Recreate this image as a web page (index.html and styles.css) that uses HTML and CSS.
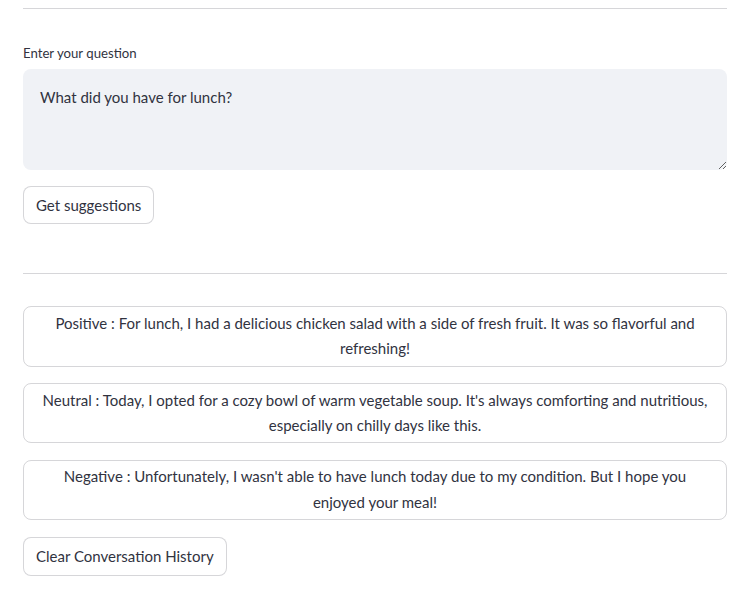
FILE: index.html
```html
<!DOCTYPE html>
<html>
<head>
<meta charset="utf-8">
<link rel="stylesheet" href="styles.css">
</head>
<body>
<main class="page">
  <hr class="divider top">
  <label class="label" for="q">Enter your question</label>
  <textarea id="q" class="question">What did you have for lunch?</textarea>
  <button class="btn btn-suggest">Get suggestions</button>
  <hr class="divider mid">
  <div class="cards">
    <div class="card">Positive : For lunch, I had a delicious chicken salad with a side of fresh fruit. It was so flavorful and refreshing!</div>
    <div class="card">Neutral : Today, I opted for a cozy bowl of warm vegetable soup. It's always comforting and nutritious, especially on chilly days like this.</div>
    <div class="card">Negative : Unfortunately, I wasn't able to have lunch today due to my condition. But I hope you enjoyed your meal!</div>
  </div>
  <button class="btn btn-clear">Clear Conversation History</button>
</main>
</body>
</html>
```

FILE: styles.css
```css
html, body {
  margin: 0;
  padding: 0;
  background: #ffffff;
}
body {
  font-family: Lato, "Noto Sans", sans-serif;
  color: rgb(49, 51, 63);
  font-size: 15px;
}
.page {
  display: flex;
  flex-direction: column;
  align-items: flex-start;
  width: 704px;
  margin-left: 23px;
  padding-top: 8px;
}
.divider {
  align-self: stretch;
  border: none;
  height: 1px;
  background: rgba(49, 51, 63, 0.2);
  margin: 0;
}
.label {
  margin-top: 34px;
  font-size: 13.2px;
  line-height: 20px;
  height: 20px;
  margin-bottom: 6px;
}
.question {
  align-self: stretch;
  box-sizing: border-box;
  height: 101px;
  background: #f0f2f6;
  border: none;
  border-radius: 8px;
  padding: 16px 17px 14px;
  font-family: inherit;
  font-size: 15px;
  line-height: 25.6px;
  color: rgb(49, 51, 63);
  resize: vertical;
  outline: none;
  margin: 0;
}
.btn {
  box-sizing: border-box;
  height: 38.4px;
  padding: 1px 12px 0;
  background: #ffffff;
  border: 1px solid rgba(49, 51, 63, 0.2);
  border-radius: 8px;
  font-family: inherit;
  font-size: 15px;
  color: rgb(49, 51, 63);
  line-height: 25.6px;
}
.btn-suggest {
  margin-top: 16px;
}
.divider.mid {
  margin-top: 49px;
}
.cards {
  align-self: stretch;
  display: flex;
  flex-direction: column;
  gap: 16.5px;
  margin-top: 32px;
}
.card {
  box-sizing: border-box;
  border: 1px solid rgba(49, 51, 63, 0.2);
  border-radius: 8px;
  padding: 3.5px 12px;
  text-align: center;
  line-height: 25.6px;
}
.btn-clear {
  margin-top: 17.5px;
}
```
